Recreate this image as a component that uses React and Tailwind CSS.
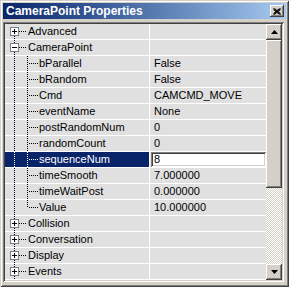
const rows = [
  { name: "Advanced", level: 0, box: "+", up: false, down: true },
  { name: "CameraPoint", level: 0, box: "-", up: true, down: true },
  { name: "bParallel", level: 1, value: "False" },
  { name: "bRandom", level: 1, value: "False" },
  { name: "Cmd", level: 1, value: "CAMCMD_MOVE" },
  { name: "eventName", level: 1, value: "None" },
  { name: "postRandomNum", level: 1, value: "0" },
  { name: "randomCount", level: 1, value: "0" },
  { name: "sequenceNum", level: 1, value: "8", selected: true },
  { name: "timeSmooth", level: 1, value: "7.000000" },
  { name: "timeWaitPost", level: 1, value: "0.000000" },
  { name: "Value", level: 1, value: "10.000000", last: true },
  { name: "Collision", level: 0, box: "+", up: true, down: true },
  { name: "Conversation", level: 0, box: "+", up: true, down: true },
  { name: "Display", level: 0, box: "+", up: true, down: true },
  { name: "Events", level: 0, box: "+", up: true, down: true },
];

function TreeLines({ row }) {
  const c = row.selected ? "#ffffff" : "#000000";
  const dots = { stroke: c, strokeWidth: 1, strokeDasharray: "1 1", shapeRendering: "crispEdges" };
  if (row.level === 0) {
    return (
      <svg width="22" height="15" className="shrink-0">
        {row.up && <line x1="9.5" y1="0" x2="9.5" y2="3" {...dots} />}
        {row.down && <line x1="9.5" y1="12" x2="9.5" y2="15" {...dots} />}
        <line x1="14" y1="7.5" x2="22" y2="7.5" {...dots} />
        <rect x="5.5" y="3.5" width="8" height="8" fill="#ffffff" stroke="#808080" shapeRendering="crispEdges" />
        <line x1="7" y1="7.5" x2="12" y2="7.5" stroke="#000" shapeRendering="crispEdges" />
        {row.box === "+" && <line x1="9.5" y1="5" x2="9.5" y2="10" stroke="#000" shapeRendering="crispEdges" />}
      </svg>
    );
  }
  return (
    <svg width="34" height="15" className="shrink-0">
      <line x1="9.5" y1="0" x2="9.5" y2="15" {...dots} />
      <line x1="22.5" y1="0" x2="22.5" y2={row.last ? 8 : 15} {...dots} />
      <line x1="24" y1="7.5" x2="33" y2="7.5" {...dots} />
    </svg>
  );
}

function Arrow({ down }) {
  return (
    <svg width="7" height="4" className={down ? "rotate-180" : ""}>
      <path d="M3.5 0 L7 4 L0 4 Z" fill="#000" />
    </svg>
  );
}

const raised =
  "bg-[#D4D0C8] shadow-[inset_-1px_-1px_#404040,inset_1px_1px_#ffffff,inset_-2px_-2px_#808080,inset_2px_2px_#D4D0C8]";

export default function App() {
  return (
    <div className="w-[289px] h-[287px] bg-[#D4D0C8] p-[3px] flex flex-col shadow-[inset_1px_1px_#D4D0C8,inset_-1px_-1px_#404040,inset_2px_2px_#ffffff,inset_-2px_-2px_#808080] font-['Liberation_Sans',Arial,sans-serif]">
      <div className="h-[16px] flex items-center justify-between bg-gradient-to-r from-[#0A246A] to-[#A6CAF0] pl-[3px] pr-[2px]">
        <span className="text-white font-bold text-[12px] leading-none">CameraPoint Properties</span>
        <div className={`w-[14px] h-[12px] flex items-center justify-center ${raised}`}>
          <svg width="8" height="7">
            <path d="M0.5 0.5 L7.5 6.5 M1.5 0.5 L7.5 5.5 M0.5 1.5 L6.5 6.5 M7.5 0.5 L0.5 6.5 M6.5 0.5 L0.5 5.5 M7.5 1.5 L1.5 6.5" stroke="#000" strokeWidth="1" />
          </svg>
        </div>
      </div>
      <div className="mt-[3px] h-[260px] flex p-[2px] shadow-[inset_1px_1px_#808080,inset_-1px_-1px_#ffffff,inset_2px_2px_#404040,inset_-2px_-2px_#D4D0C8] mr-[2px]">
        <div className="flex-1 flex flex-col bg-[#E0E0E0] text-[11px] text-black">
          {rows.map((row) => (
            <div key={row.name} className="h-[16px] flex border-b border-white">
              <div
                className={`w-[145px] flex items-center border-r border-white ${
                  row.selected ? "bg-[#0A246A] text-white" : ""
                }`}
              >
                <TreeLines row={row} />
                <span className={row.level === 0 ? "ml-[1px]" : ""}>{row.name}</span>
              </div>
              <div className="flex-1 flex items-center">
                {row.selected ? (
                  <div className="ml-[1px] w-full h-[15px] bg-white pl-[3px] flex items-center shadow-[inset_1px_1px_#808080,inset_-1px_-1px_#ffffff,inset_2px_2px_#404040,inset_-2px_-2px_#D4D0C8]">
                    {row.value}
                  </div>
                ) : (
                  <span className="pl-[4px]">{row.value}</span>
                )}
              </div>
            </div>
          ))}
        </div>
        <div className="w-[16px] flex flex-col">
          <div className={`h-[16px] flex items-center justify-center ${raised}`}>
            <Arrow />
          </div>
          <div className={`h-[148px] ${raised}`} />
          <div className="flex-1 bg-[repeating-conic-gradient(#D4D0C8_0_25%,#ffffff_0_50%)] bg-[length:2px_2px]" />
          <div className={`h-[16px] flex items-center justify-center ${raised}`}>
            <Arrow down />
          </div>
        </div>
      </div>
    </div>
  );
}
